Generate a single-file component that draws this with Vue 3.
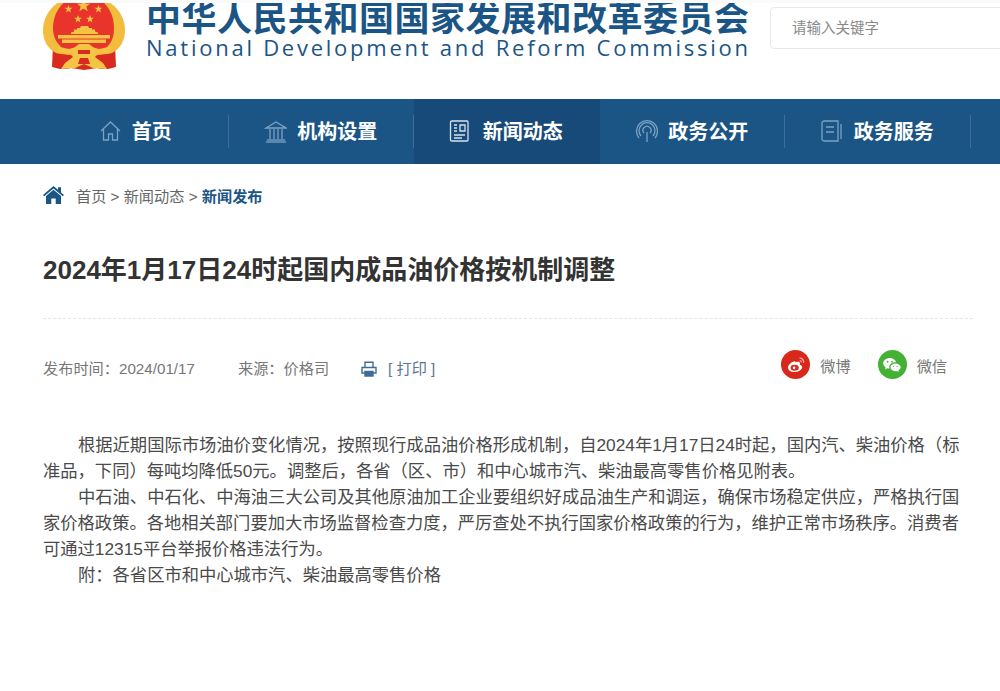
<template>
  <div class="page">
    <header class="top">
      <svg class="emblem" viewBox="0 0 82 70" width="82" height="70">
        <!-- ribbon goes under the ring -->
        <path d="M10 42L9 64C16 66 20 67 28 65L41 67L54 65C62 67 66 66 73 64L72 42Z" fill="#d92a1f" />
        <path d="M41 -8C65 -8 82 8 82 27C82 38 77 46 69 50C60 53 22 53 13 50C5 46 0 38 0 27C0 8 17 -8 41 -8Z" fill="#f2bd3d" />
        <path d="M41 -8C60 -8 71 8 71 25C71 33 69 39 64 44C54 48 28 48 18 44C13 39 10 33 10 25C10 8 22 -8 41 -8Z" fill="#e8342a" />
        <g fill="#f6c445">
          <path d="M25.5 2l1 2.7 2.9.1-2.3 1.8 .8 2.8-2.4-1.6-2.4 1.6 .8-2.8-2.3-1.8 2.9-.1z" />
          <path d="M55.5 2l1 2.7 2.9.1-2.3 1.8 .8 2.8-2.4-1.6-2.4 1.6 .8-2.8-2.3-1.8 2.9-.1z" />
          <path d="M40.5 -4l1.8 4.6 4.8.1-3.8 2.9 1.4 4.7-4.2-2.8-4.2 2.8 1.4-4.7-3.8-2.9 4.8-.1z" />
          <path d="M35 12l1 2.7 2.9.1-2.3 1.8 .8 2.8-2.4-1.6-2.4 1.6 .8-2.8-2.3-1.8 2.9-.1z" />
          <path d="M47 12l1 2.7 2.9.1-2.3 1.8 .8 2.8-2.4-1.6-2.4 1.6 .8-2.8-2.3-1.8 2.9-.1z" />
          <path d="M28 31V29.5L31 28.5V26.5H34V25H37L38 23H45L46 25H49V26.5H52V28.5L55 29.5V31Z" />
          <rect x="15" y="32" width="52" height="3.5" />
          <rect x="19" y="36.5" width="44" height="3.5" />
          <path d="M14 43C20 47 26 47 32 44L36 41H46L50 44C56 47 62 47 68 43L66 49L56 50L52 54L60 60L64 66L50 65L41 61L32 65L18 66L22 60L30 54L26 50L16 49Z" />
        </g>
        <path d="M35 47H47V51H35Z" fill="#d92a1f" />
        <path d="M37 55H45L47 61H35Z" fill="#d92a1f" />
      </svg>
      <div class="brand">
        <div class="brand-cn">中华人民共和国国家发展和改革委员会</div>
        <div class="brand-en">National Development and Reform Commission</div>
      </div>
      <div class="search">
        <input type="text" placeholder="请输入关键字" />
      </div>
    </header>

    <nav class="nav">
      <a v-for="item in navItems" :key="item.label" class="nav-item" :class="{ active: item.active }">
        <svg class="nav-icon" viewBox="0 0 24 24" width="24" height="24" fill="none" stroke="currentColor" stroke-width="1.3">
          <path v-for="d in item.paths" :key="d" :d="d" />
        </svg>
        <span>{{ item.label }}</span>
      </a>
    </nav>

    <main class="main">
      <div class="crumbs">
        <svg class="crumb-home" viewBox="0 0 21 18" width="21" height="18">
          <path d="M10.5 0L15 3.8V1.2H18V6.4L21 9L19.8 10.2L10.5 2.4L1.2 10.2L0 9Z" fill="#1b5586" />
          <path d="M10.5 3.8L18 10V18H12.7V12.5H8.3V18H3V10Z" fill="#1b5586" />
        </svg>
        <span>首页 &gt; 新闻动态 &gt; <b>新闻发布</b></span>
      </div>

      <h1 class="title">2024年1月17日24时起国内成品油价格按机制调整</h1>

      <div class="meta">
        <span class="date">发布时间&#xFF1A;2024/01/17</span>
        <span class="source">来源&#xFF1A;价格司</span>
        <svg class="printer" viewBox="0 0 16 16" width="16" height="16" fill="none" stroke="#3f6d96" stroke-width="1.4">
          <path d="M4 6V1.2H12V6" />
          <path d="M4 12H1V6.5H15V12H12" />
          <path d="M4 10.5H12V15H4Z" fill="#3f6d96" />
        </svg>
        <span class="print">[ 打印 ]</span>
        <div class="share">
          <span class="round weibo">
            <svg viewBox="0 0 20 20" width="22" height="22">
              <path d="M8.6 6.6C5.4 7.4 2.4 10.2 2.8 12.8C3.2 15.6 6.6 16.8 9.8 16.3C13.2 15.8 16 13.8 15.6 11.6C15.4 10.4 14.3 10 13.4 9.8C13.8 8.6 13.7 7.6 12.8 7.2C11.6 6.7 10.2 7.3 9.5 7.7C9.7 6.9 9.5 6.3 8.6 6.6Z" fill="#fff" />
              <ellipse cx="8.8" cy="12.5" rx="3.7" ry="2.7" fill="#d9281b" />
              <circle cx="8.3" cy="12.6" r="1.2" fill="#fff" />
              <path d="M13.2 3.8C15.6 3.6 17.4 5.6 16.8 8" fill="none" stroke="#f6b0a8" stroke-width="1.2" />
              <path d="M13.4 6C14.4 5.9 15 6.7 14.8 7.6" fill="none" stroke="#f6b0a8" stroke-width="1" />
            </svg>
          </span>
          <span class="share-label">微博</span>
          <span class="round wechat">
            <svg viewBox="0 0 20 20" width="22" height="22" fill="#fff">
              <path d="M8 3.6C4.7 3.6 2 5.8 2 8.5C2 10 2.9 11.4 4.2 12.3L3.7 14L5.7 13C6.4 13.2 7 13.3 7.7 13.3C7.5 12.8 7.5 12.4 7.5 12C7.5 9.5 9.9 7.5 13 7.5H13.7C13 5.3 10.7 3.6 8 3.6Z" />
              <path d="M13 8.6C10.6 8.6 8.6 10.2 8.6 12.1C8.6 14.1 10.6 15.6 13 15.6C13.5 15.6 14.1 15.5 14.6 15.4L16.2 16.3L15.8 14.8C17.1 14.1 17.9 13.2 17.9 12.1C17.9 10.2 15.6 8.6 13 8.6Z" />
              <g fill="#44b035">
                <circle cx="6" cy="7" r=".8" />
                <circle cx="10" cy="7" r=".8" />
                <circle cx="11.4" cy="11.2" r=".6" />
                <circle cx="14.6" cy="11.2" r=".6" />
              </g>
            </svg>
          </span>
          <span class="share-label">微信</span>
        </div>
      </div>

      <article class="content">
        <p v-for="p in paragraphs" :key="p">{{ p }}</p>
      </article>
    </main>
  </div>
</template>

<script setup>
const navItems = [
  {
    label: "首页",
    paths: ["M3 12L12.5 3L22 12", "M5.5 10V21H10.5V15H14.5V21H19.5V10"],
  },
  {
    label: "机构设置",
    paths: ["M3 9L13 3L23 9H3Z", "M4 21H22", "M3 23H23", "M7 10V20", "M11 10V20", "M15 10V20", "M19 10V20"],
  },
  {
    label: "新闻动态",
    active: true,
    paths: [
      "M3 2H18C19 2 19 3 19 3V21C19 22 18 22 18 22H3C2 22 1.5 21.5 1.5 21V3C1.5 2.5 2 2 3 2Z",
      "M5 6H8M5 9H8M5 12H8",
      "M11 6H16V12H11Z",
      "M5 16H16M5 19H13",
    ],
  },
  {
    label: "政务公开",
    paths: [
      "M13 13V23",
      "M10 14A4 4 0 1 1 16 14",
      "M7 17A8 8 0 1 1 19 17",
      "M5 19A10.5 10.5 0 1 1 21 19",
    ],
  },
  {
    label: "政务服务",
    paths: ["M2 4C2 3 3 2 4 2H18V22H4C3 22 2 21 2 20Z", "M21 5V20", "M6 8H14M6 13H14"],
  },
];

const paragraphs = [
  "根据近期国际市场油价变化情况\uFF0C按照现行成品油价格形成机制\uFF0C自2024年1月17日24时起\uFF0C国内汽、柴油价格\uFF08标准品\uFF0C下同\uFF09每吨均降低50元。调整后\uFF0C各省\uFF08区、市\uFF09和中心城市汽、柴油最高零售价格见附表。",
  "中石油、中石化、中海油三大公司及其他原油加工企业要组织好成品油生产和调运\uFF0C确保市场稳定供应\uFF0C严格执行国家价格政策。各地相关部门要加大市场监督检查力度\uFF0C严厉查处不执行国家价格政策的行为\uFF0C维护正常市场秩序。消费者可通过12315平台举报价格违法行为。",
  "附\uFF1A各省区市和中心城市汽、柴油最高零售价格",
];
</script>

<style>
html,
body {
  margin: 0;
  background: #fff;
  overflow: hidden;
}
</style>

<style scoped>
.page {
  width: 1000px;
  height: 691px;
  overflow: hidden;
  font-family: "Liberation Sans", "Noto Sans CJK SC", sans-serif;
  color: #666;
}

.top {
  height: 99px;
  display: flex;
  align-items: flex-start;
  padding-left: 43px;
  box-sizing: border-box;
  overflow: hidden;
  border-top: 3px solid #fafafa;
}

.emblem {
  flex: none;
  overflow: hidden;
}

.brand {
  flex: none;
  width: 604px;
  margin-left: 21px;
  color: #1b5586;
}

.brand-cn {
  font-size: 35px;
  line-height: 32px;
  font-weight: 700;
  letter-spacing: 0.5px;
  white-space: nowrap;
}

.brand-en {
  font-family: "Open Sans", sans-serif;
  font-size: 22px;
  line-height: 26px;
  letter-spacing: 2.75px;
  margin-top: -1px;
  white-space: nowrap;
}

.search {
  flex: none;
  margin: 4px 0 0 20px;
}

.search input {
  display: block;
  width: 240px;
  height: 42px;
  box-sizing: border-box;
  padding: 0 22px 3px 21px;
  border: 1px solid #e8e8e8;
  border-radius: 4px;
  outline: none;
  font-family: "Noto Sans CJK SC", sans-serif;
  font-size: 14.5px;
}

.search input::placeholder {
  color: #888;
}

.nav {
  height: 65px;
  display: flex;
  padding-left: 43px;
  background: #1b5586;
}

.nav-item {
  flex: none;
  width: 185.5px;
  height: 65px;
  box-sizing: border-box;
  padding: 0 2px 2px 0;
  display: flex;
  align-items: center;
  justify-content: center;
  gap: 10px;
  color: #fff;
  font-size: 20px;
  font-weight: 700;
  position: relative;
}

.nav-item::after {
  content: "";
  position: absolute;
  right: 0;
  top: 16px;
  height: 33px;
  width: 1px;
  background: #3b6e9b;
}

.nav-item.active {
  background: #174a78;
}

.nav-item.active::after {
  display: none;
}

.nav-icon {
  color: #7ca2c4;
  flex: none;
}

.nav-item.active .nav-icon {
  color: #d5e2ee;
}

.main {
  padding: 0 27px 0 43px;
}

.crumbs {
  display: flex;
  align-items: center;
  gap: 12px;
  height: 24px;
  margin-top: 19px;
  font-size: 15.2px;
  color: #666;
}

.crumbs b {
  color: #1b5586;
}

.title {
  margin: 43px 0 0;
  font-size: 26px;
  line-height: 40px;
  font-weight: 700;
  color: #333;
}

.meta {
  display: flex;
  align-items: center;
  height: 60px;
  margin-top: 28px;
  padding-top: 18px;
  border-top: 1px dashed #e6e6e6;
  font-size: 15.2px;
  color: #777;
}

.source {
  margin-left: 43px;
}

.printer {
  margin: 4px 0 0 32px;
}

.print {
  margin-left: 11px;
  color: #5c7690;
}

.share {
  margin: 0 0 5px auto;
  display: flex;
  align-items: center;
  padding-right: 26px;
}

.round {
  width: 29px;
  height: 29px;
  border-radius: 50%;
  display: flex;
  align-items: center;
  justify-content: center;
}

.weibo {
  background: #d9281b;
}

.wechat {
  background: #44b035;
  margin-left: 27px;
}

.share-label {
  margin-left: 10px;
}

.content {
  margin-top: 36px;
  font-size: 17.3px;
  line-height: 25.9px;
  color: #4a4a4a;
}

.content p {
  margin: 0;
  text-indent: 35px;
}
</style>
